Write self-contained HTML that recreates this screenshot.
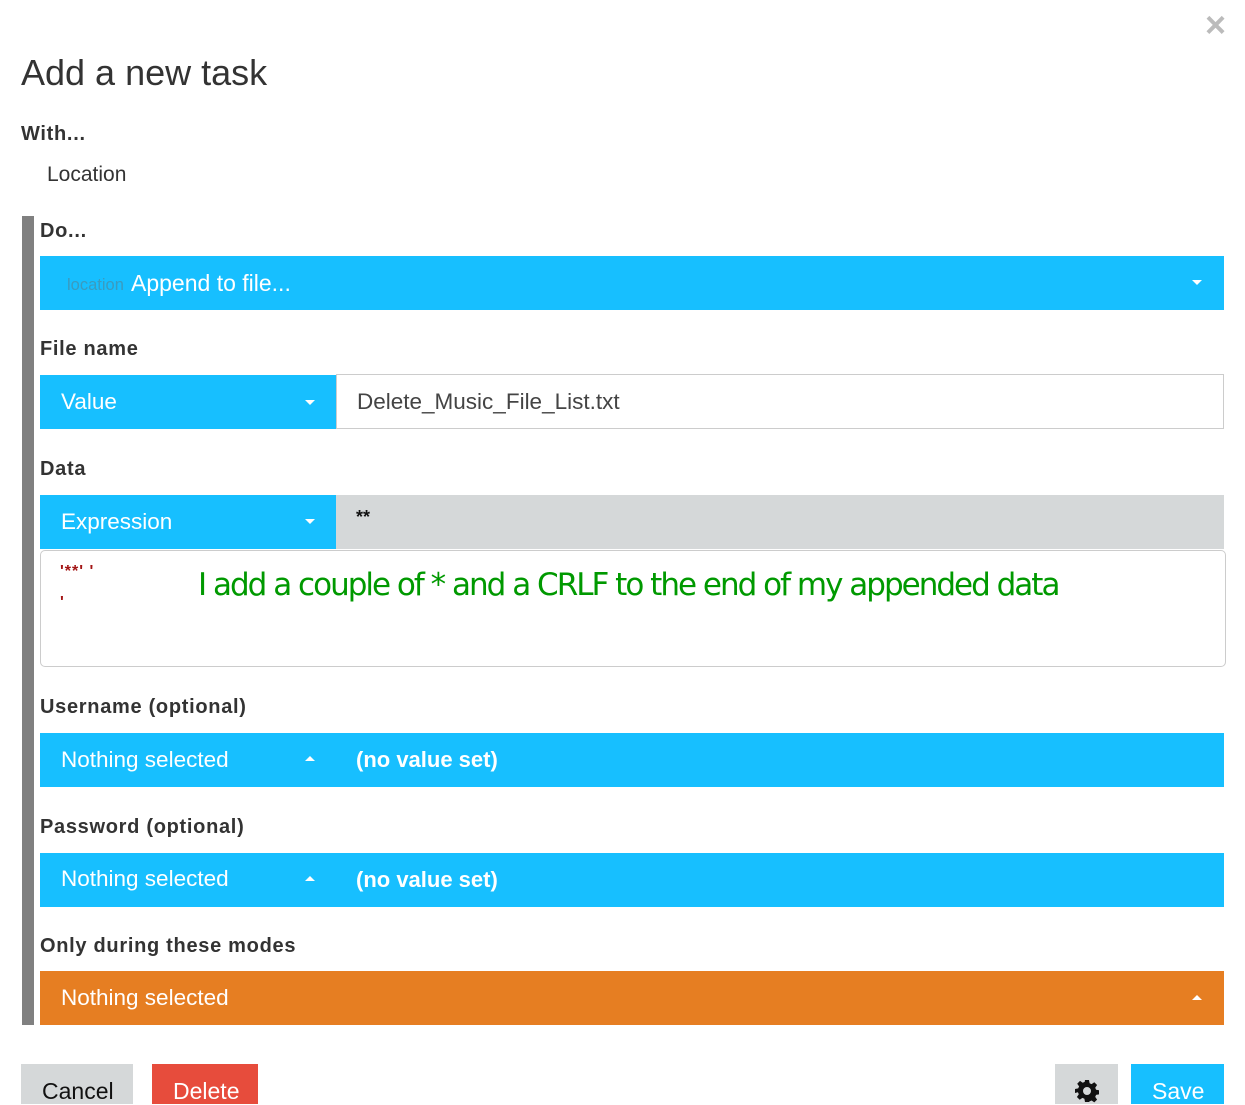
<!DOCTYPE html>
<html><head><meta charset="utf-8"><style>
body{margin:0;width:1245px;height:1097px;overflow:hidden;background:#fff;font-family:"Liberation Sans",sans-serif;color:#333;position:relative}
.a{position:absolute}
.lbl{position:absolute;left:40px;font-weight:bold;font-size:20px;color:#333;letter-spacing:0.7px}
.blue{background:#17bfff;color:#fff}
.caret{position:absolute;width:0;height:0;border-left:5px solid transparent;border-right:5px solid transparent}
.dn{border-top:5px solid #fff}.up{border-bottom:5px solid #fff}
.t{font-size:22.5px;position:absolute;top:14px;left:21px}
</style></head><body>
<div class="a" style="left:1205px;top:4px;font-size:36px;font-weight:bold;color:#bbb">×</div>
<div class="a" style="left:21px;top:52px;font-size:36px;color:#333">Add a new task</div>
<div class="a" style="left:21px;top:123px;font-size:20px;font-weight:bold;letter-spacing:0.7px">With...</div>
<div class="a" style="left:47px;top:163px;font-size:21px">Location</div>
<div class="a" style="left:22px;top:216px;width:12px;height:809px;background:#808080"></div>
<div class="lbl" style="top:220px">Do...</div>
<div class="a blue" style="left:40px;top:256px;width:1184px;height:54px"><span class="a" style="left:27px;top:20px;font-size:16.5px;color:#3a9bbf">location</span><span class="a" style="left:91px;top:14px;font-size:23px">Append to file...</span><div class="caret dn" style="left:1152px;top:24px"></div></div>
<div class="lbl" style="top:338px">File name</div>
<div class="a blue" style="left:40px;top:375px;width:296px;height:54px"><span class="t">Value</span><div class="caret dn" style="left:265px;top:25px"></div></div>
<div class="a" style="left:336px;top:374px;width:886px;height:53px;border:1px solid #ccc"><span class="a" style="left:20px;top:14px;font-size:22.5px;color:#444">Delete_Music_File_List.txt</span></div>
<div class="lbl" style="top:458px">Data</div>
<div class="a blue" style="left:40px;top:495px;width:296px;height:54px"><span class="t">Expression</span><div class="caret dn" style="left:265px;top:24px"></div></div>
<div class="a" style="left:336px;top:495px;width:888px;height:54px;background:#d5d8d9"><span class="a" style="left:20px;top:12px;font-size:18px;font-weight:bold;color:#111">**</span></div>
<div class="a" style="left:40px;top:550px;width:1184px;height:115px;border:1px solid #ccc;border-radius:5px"></div>
<div class="a" style="left:60px;top:563px;font-size:16px;color:#a31515;font-weight:bold;letter-spacing:1px">'**' '</div>
<div class="a" style="left:60px;top:594px;font-size:16px;color:#a31515;font-weight:bold">'</div>
<div class="a" style="left:198px;top:567px;font-size:31px;color:#009900;font-family:'DejaVu Sans',sans-serif;letter-spacing:-2.0px;white-space:nowrap">I add a couple of * and a CRLF to the end of my appended data</div>
<div class="lbl" style="top:696px">Username (optional)</div>
<div class="a blue" style="left:40px;top:733px;width:296px;height:54px"><span class="t">Nothing selected</span><div class="caret up" style="left:265px;top:23px"></div></div>
<div class="a blue" style="left:336px;top:733px;width:888px;height:54px"><span class="a" style="left:20px;top:14px;font-size:22px;font-weight:bold">(no value set)</span></div>
<div class="lbl" style="top:816px">Password (optional)</div>
<div class="a blue" style="left:40px;top:853px;width:296px;height:54px"><span class="t" style="top:13px">Nothing selected</span><div class="caret up" style="left:265px;top:23px"></div></div>
<div class="a blue" style="left:336px;top:853px;width:888px;height:54px"><span class="a" style="left:20px;top:14px;font-size:22px;font-weight:bold">(no value set)</span></div>
<div class="lbl" style="top:935px">Only during these modes</div>
<div class="a" style="left:40px;top:971px;width:1184px;height:54px;background:#e67e22;color:#fff"><span class="t" style="top:14px">Nothing selected</span><div class="caret up" style="left:1152px;top:24px"></div></div>
<div class="a" style="left:21px;top:1064px;width:112px;height:40px;background:#d5d8d9"><span class="a" style="left:21px;top:14px;font-size:23px;color:#111">Cancel</span></div>
<div class="a" style="left:152px;top:1064px;width:106px;height:40px;background:#e74c3c"><span class="a" style="left:21px;top:14px;font-size:23px;color:#fff">Delete</span></div>
<div class="a" style="left:1055px;top:1064px;width:63px;height:40px;background:#d5d8d9">
<svg class="a" style="left:20px;top:15px" width="24" height="24" viewBox="0 0 24 24"><path fill="#111" d="M10 1h4l.6 3.2 2 .9 2.7-1.9 2.8 2.8-1.9 2.7.9 2 3.2.6v4l-3.2.6-.9 2 1.9 2.7-2.8 2.8-2.7-1.9-2 .9L14 23h-4l-.6-3.2-2-.9-2.7 1.9-2.8-2.8 1.9-2.7-.9-2L0 14v-4l3.2-.6.9-2-1.9-2.7 2.8-2.8 2.7 1.9 2-.9zM12 8a4 4 0 100 8 4 4 0 000-8z"/></svg></div>
<div class="a blue" style="left:1131px;top:1064px;width:93px;height:40px"><span class="a" style="left:21px;top:14px;font-size:23px">Save</span></div>
</body></html>
